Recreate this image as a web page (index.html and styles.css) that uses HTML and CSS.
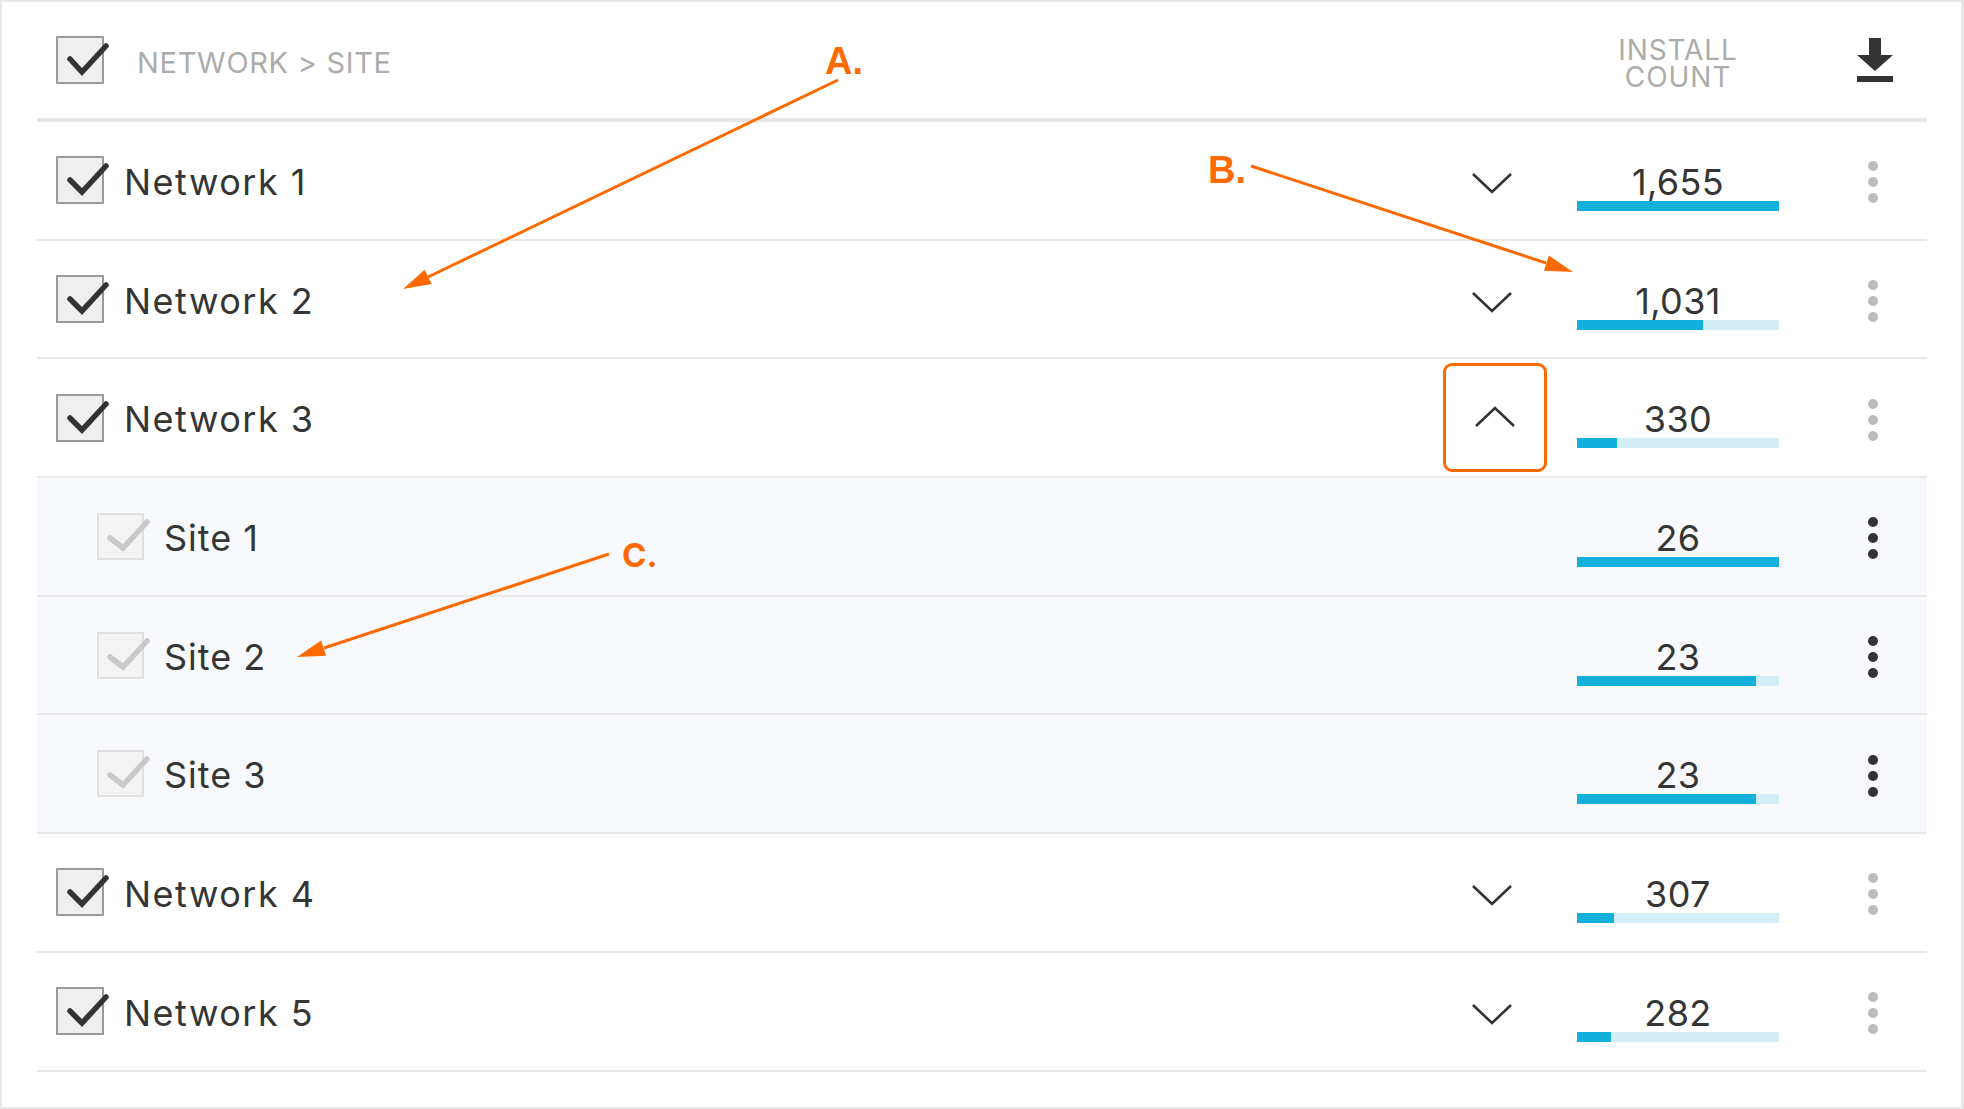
FILE: index.html
```html
<!DOCTYPE html>
<html>
<head>
<meta charset="utf-8">
<title>Install count</title>
<link rel="stylesheet" href="styles.css">
</head>
<body>
<div class="frame">
  <div class="table">
    <div class="head">
      <span class="cb cb-net"><svg class="tick" viewBox="0 0 60 50"><polyline points="14,23 26,36 50,10"/></svg></span>
      <span class="head-title">NETWORK &gt; SITE</span>
      <span class="chev-cell"></span>
      <span class="head-count"><span class="hc-line">INSTALL</span><span class="hc-line">COUNT</span></span>
      <span class="act">
        <svg class="dl" viewBox="0 0 36 44"><rect x="12" y="0" width="12" height="18"/><polygon points="0,17 36,17 18,33"/><rect x="0" y="38" width="36" height="6"/></svg>
      </span>
    </div>

    <div class="row net">
      <span class="cb cb-net"><svg class="tick" viewBox="0 0 60 50"><polyline points="14,24 26,36 50,10"/></svg></span>
      <span class="name">Network 1</span>
      <span class="chev-cell"><svg class="chev down" viewBox="0 0 42 22"><polyline points="2,2 21,20 40,2"/></svg></span>
      <span class="count"><span class="num">1,655</span><span class="bar"><span class="fill" style="width:100%"></span></span></span>
      <span class="act"><span class="kebab"><i></i><i></i><i></i></span></span>
    </div>

    <div class="row net">
      <span class="cb cb-net"><svg class="tick" viewBox="0 0 60 50"><polyline points="14,24 26,36 50,10"/></svg></span>
      <span class="name">Network 2</span>
      <span class="chev-cell"><svg class="chev down" viewBox="0 0 42 22"><polyline points="2,2 21,20 40,2"/></svg></span>
      <span class="count"><span class="num">1,031</span><span class="bar"><span class="fill" style="width:62.3%"></span></span></span>
      <span class="act"><span class="kebab"><i></i><i></i><i></i></span></span>
    </div>

    <div class="row net">
      <span class="cb cb-net"><svg class="tick" viewBox="0 0 60 50"><polyline points="14,24 26,36 50,10"/></svg></span>
      <span class="name">Network 3</span>
      <span class="chev-cell"><span class="hl"><svg class="chev" viewBox="0 0 42 22"><polyline points="2,20 21,2 40,20"/></svg></span></span>
      <span class="count"><span class="num">330</span><span class="bar"><span class="fill" style="width:19.9%"></span></span></span>
      <span class="act"><span class="kebab"><i></i><i></i><i></i></span></span>
    </div>

    <div class="row site">
      <span class="cb cb-site"><svg class="tick" viewBox="0 0 60 50"><polyline points="13,25 26,35 50,9"/></svg></span>
      <span class="name">Site 1</span>
      <span class="chev-cell"></span>
      <span class="count"><span class="num">26</span><span class="bar"><span class="fill" style="width:100%"></span></span></span>
      <span class="act"><span class="kebab dark"><i></i><i></i><i></i></span></span>
    </div>

    <div class="row site">
      <span class="cb cb-site"><svg class="tick" viewBox="0 0 60 50"><polyline points="13,25 26,35 50,9"/></svg></span>
      <span class="name">Site 2</span>
      <span class="chev-cell"></span>
      <span class="count"><span class="num">23</span><span class="bar"><span class="fill" style="width:88.5%"></span></span></span>
      <span class="act"><span class="kebab dark"><i></i><i></i><i></i></span></span>
    </div>

    <div class="row site">
      <span class="cb cb-site"><svg class="tick" viewBox="0 0 60 50"><polyline points="13,25 26,35 50,9"/></svg></span>
      <span class="name">Site 3</span>
      <span class="chev-cell"></span>
      <span class="count"><span class="num">23</span><span class="bar"><span class="fill" style="width:88.5%"></span></span></span>
      <span class="act"><span class="kebab dark"><i></i><i></i><i></i></span></span>
    </div>

    <div class="row net">
      <span class="cb cb-net"><svg class="tick" viewBox="0 0 60 50"><polyline points="14,24 26,36 50,10"/></svg></span>
      <span class="name">Network 4</span>
      <span class="chev-cell"><svg class="chev down" viewBox="0 0 42 22"><polyline points="2,2 21,20 40,2"/></svg></span>
      <span class="count"><span class="num">307</span><span class="bar"><span class="fill" style="width:18.5%"></span></span></span>
      <span class="act"><span class="kebab"><i></i><i></i><i></i></span></span>
    </div>

    <div class="row net">
      <span class="cb cb-net"><svg class="tick" viewBox="0 0 60 50"><polyline points="14,24 26,36 50,10"/></svg></span>
      <span class="name">Network 5</span>
      <span class="chev-cell"><svg class="chev down" viewBox="0 0 42 22"><polyline points="2,2 21,20 40,2"/></svg></span>
      <span class="count"><span class="num">282</span><span class="bar"><span class="fill" style="width:17%"></span></span></span>
      <span class="act"><span class="kebab"><i></i><i></i><i></i></span></span>
    </div>
  </div>

  <svg class="notes" viewBox="0 0 1964 1109" width="1964" height="1109">
    <g class="arrow">
      <line x1="838" y1="80" x2="428" y2="277"/>
      <polygon points="403,289 431.7,284.1 424.7,269.7"/>
      <line x1="1251" y1="166" x2="1546" y2="263"/>
      <polygon points="1573,272 1548.9,255.6 1543.9,270.8"/>
      <line x1="609" y1="554" x2="324" y2="648"/>
      <polygon points="297,657 326.1,655.8 321.1,640.6"/>
    </g>
    <text class="lbl" x="825" y="74">A.</text>
    <text class="lbl" x="1208" y="183">B.</text>
    <text class="lbl lbl-c" x="622" y="567">C.</text>
  </svg>
</div>
</body>
</html>
```

FILE: styles.css
```css
html, body {
  margin: 0;
  padding: 0;
  background: #ffffff;
}

.frame {
  position: relative;
  width: 1964px;
  height: 1109px;
  box-sizing: border-box;
  border: 2px solid #e7e7e7;
  border-right-width: 3px;
  padding: 0 34px 0 35px;
  font-family: "Inter", "Noto Sans", sans-serif;
  color: #333333;
  overflow: hidden;
}

.table {
  display: flex;
  flex-direction: column;
}

.head {
  display: flex;
  align-items: center;
  height: 120px;
  box-sizing: border-box;
  border-bottom: 4px solid #e6e6e6;
  padding: 0 20px 0 19px;
}

.row {
  display: flex;
  align-items: center;
  height: 118.7px;
  box-sizing: border-box;
  border-bottom: 2px solid #e8e8e8;
  padding: 0 20px 0 19px;
}

.row.site {
  background: #f8f9fc;
  padding-left: 60px;
}

/* checkboxes */
.cb {
  position: relative;
  flex: none;
  box-sizing: border-box;
  width: 48px;
  height: 48px;
}

.cb-net {
  border: 2px solid #9a9a9a;
  background: #efefef;
}

.cb-site {
  width: 47px;
  height: 47px;
  border: 2px solid #e0e0e0;
  background: #f3f3f3;
}

.tick {
  position: absolute;
  left: -2px;
  top: -2px;
  width: 60px;
  height: 50px;
  overflow: visible;
}

.tick polyline {
  fill: none;
  stroke: #333333;
  stroke-width: 5.5;
  stroke-linecap: round;
  stroke-linejoin: miter;
}

.cb-site .tick polyline {
  stroke: #c9c9c9;
}

/* header texts */
.head-title {
  flex: 1;
  margin-left: 33px;
  padding-top: 6px;
  font-size: 29px;
  letter-spacing: 0.7px;
  color: #acacac;
  line-height: 36px;
}

.head-count {
  width: 202px;
  margin-left: 30px;
  display: flex;
  flex-direction: column;
  align-items: center;
  padding-top: 7px;
  color: #acacac;
}

.hc-line {
  display: block;
  font-size: 28px;
  line-height: 27px;
  height: 27px;
  letter-spacing: 0.9px;
}

/* rows */
.name {
  flex: 1;
  margin-left: 20px;
  padding-top: 3px;
  font-size: 36px;
  line-height: 36px;
  letter-spacing: 1.5px;
  color: #353535;
}

.site .name {
  letter-spacing: 1px;
}

.chev-cell {
  flex: none;
  width: 104px;
  display: flex;
  align-items: center;
  justify-content: center;
}

.chev {
  width: 42px;
  height: 22px;
  overflow: visible;
}

.chev.down {
  margin: 5px 7px 0 0;
}

.chev polyline {
  fill: none;
  stroke: #333333;
  stroke-width: 2.6;
  stroke-linecap: butt;
  stroke-linejoin: miter;
}

.hl {
  box-sizing: border-box;
  width: 104px;
  height: 109px;
  border: 3px solid #ff6a00;
  border-radius: 9px;
  display: flex;
  align-items: center;
  justify-content: center;
  padding-bottom: 2px;
}

.count {
  flex: none;
  width: 202px;
  margin-left: 30px;
  display: flex;
  flex-direction: column;
  align-items: center;
  padding-top: 14px;
}

.num {
  font-size: 36px;
  line-height: 36px;
  letter-spacing: 0.4px;
  color: #353535;
}

.bar {
  display: block;
  width: 202px;
  height: 10px;
  margin-top: 1px;
  background: #d3eef6;
}

.fill {
  display: block;
  height: 100%;
  background: #14b0dc;
}

.act {
  flex: none;
  width: 68px;
  margin-left: 60px;
  display: flex;
  align-items: center;
  justify-content: center;
}

.dl {
  width: 36px;
  height: 44px;
  fill: #333333;
  margin-left: 4px;
}

.kebab {
  display: flex;
  flex-direction: column;
  gap: 6px;
  padding-top: 4px;
}

.kebab i {
  display: block;
  width: 10px;
  height: 10px;
  border-radius: 50%;
  background: #bcbcbc;
}

.kebab.dark i {
  background: #333333;
}

/* annotation overlay */
.notes {
  position: absolute;
  left: -2px;
  top: -2px;
  pointer-events: none;
}

.arrow line {
  stroke: #ff6a00;
  stroke-width: 3;
}

.arrow polygon {
  fill: #ff6a00;
}

.lbl {
  font-family: "Liberation Sans", Arial, sans-serif;
  font-weight: bold;
  font-size: 38px;
  fill: #ff6a00;
}

.lbl-c {
  font-family: "Inter", sans-serif;
  font-size: 33px;
}
```
